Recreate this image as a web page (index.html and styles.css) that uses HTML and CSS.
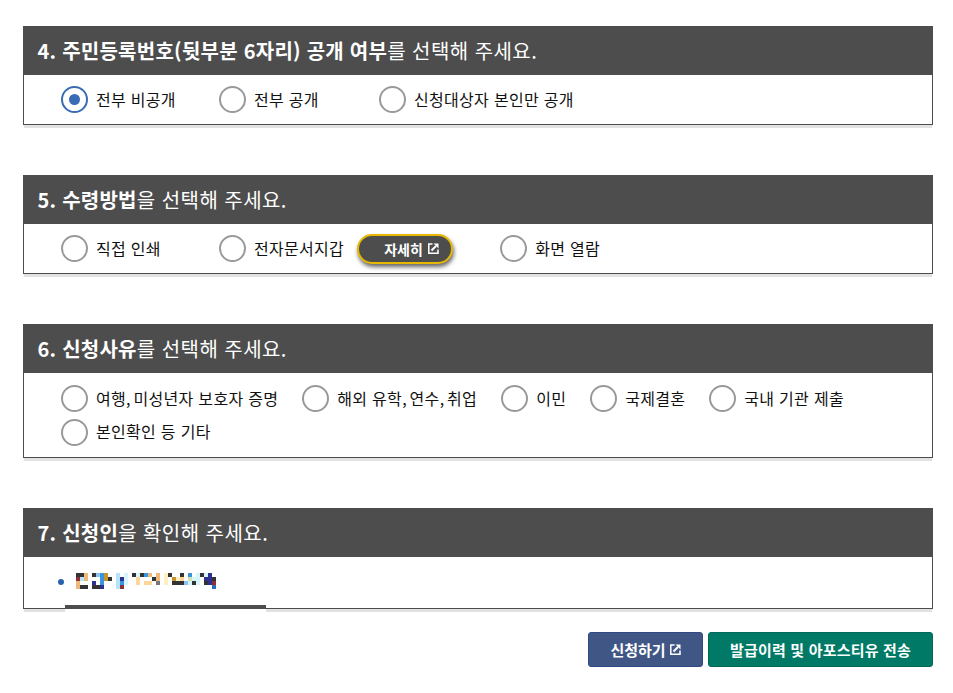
FILE: index.html
```html
<!DOCTYPE html>
<html lang="ko">
<head>
<meta charset="utf-8">
<title>신청</title>
<link rel="stylesheet" href="styles.css">
</head>
<body>
<section class="card">
  <h2 class="head"><b>4. 주민등록번호(뒷부분 6자리) 공개 여부</b>를 선택해 주세요.</h2>
  <div class="body">
    <label class="opt col-a"><span class="radio on"></span>전부 비공개</label>
    <label class="opt col-b"><span class="radio"></span>전부 공개</label>
    <label class="opt"><span class="radio"></span>신청대상자 본인만 공개</label>
  </div>
</section>
<section class="card">
  <h2 class="head"><b>5. 수령방법</b>을 선택해 주세요.</h2>
  <div class="body">
    <label class="opt col-a"><span class="radio"></span>직접 인쇄</label>
    <label class="opt tight"><span class="radio"></span>전자문서지갑</label>
    <a class="more">자세히 <svg class="ext" viewBox="0 0 11 11"><path d="M4.500 1H.8v9.200H10V6.500" fill="none" stroke="currentColor" stroke-width="1.500"/><path d="M3.500 7.500 8 3" fill="none" stroke="currentColor" stroke-width="2"/><path d="M5.500 .5H10.500V5.500z" fill="currentColor"/></svg></a>
    <label class="opt"><span class="radio"></span>화면 열람</label>
  </div>
</section>
<section class="card">
  <h2 class="head"><b>6. 신청사유</b>를 선택해 주세요.</h2>
  <div class="body wrap">
    <label class="opt"><span class="radio"></span><span>여행<span class="comma">,</span> 미성년자 보호자 증명</span></label>
    <label class="opt"><span class="radio"></span><span>해외 유학<span class="comma">,</span> 연수<span class="comma">,</span> 취업</span></label>
    <label class="opt"><span class="radio"></span>이민</label>
    <label class="opt"><span class="radio"></span>국제결혼</label>
    <label class="opt"><span class="radio"></span>국내 기관 제출</label>
    <label class="opt"><span class="radio"></span>본인확인 등 기타</label>
  </div>
</section>
<section class="card last">
  <h2 class="head"><b>7. 신청인</b>을 확인해 주세요.</h2>
  <div class="body person">
    <span class="dot"></span>
    <svg class="mosaic" viewBox="0 0 35 4" shape-rendering="crispEdges">
      <path fill="#333333" d="M0 0h2v1H0zM4 0h1v1H4zM14 0h1v1h-1zM16 0h1v1h-1zM23 0h1v1h-1zM26 0h1v1h-1zM31 0h1v1h-1zM8 1h1v1H8zM19 1h1v1h-1zM34 1h1v1h-1zM24 2h3v1h-3zM29 2h1v1h-1zM32 2h1v1h-1zM1 3h2v1H1zM4 3h2v1H4z"/>
      <path fill="#f0b878" d="M2 0h1v2H2zM18 0h1v1h-1zM20 0h1v2h-1zM0 2h1v2H0z"/>
      <path fill="#3a96dc" d="M6 0h1v3H6zM17 0h1v1h-1zM28 0h1v1h-1zM11 2h1v1h-1z"/>
      <path fill="#8cc4f0" d="M5 0h1v1H5zM27 2h1v1h-1z"/>
      <path fill="#c8922c" d="M7 0h1v2H7zM24 1h1v1h-1z"/>
      <path fill="#2f2f8f" d="M33 0h1v1h-1zM11 1h1v1h-1zM32 1h2v1h-2zM4 2h1v1H4zM33 2h1v1h-1zM6 3h1v1H6z"/>
      <path fill="#b4e4fa" d="M10 0h1v4h-1zM1 1h1v1H1z"/>
      <path fill="#8e2f35" d="M0 1h1v1H0zM34 2h1v1h-1zM11 3h1v1h-1z"/>
      <path fill="#d6f6fc" d="M12 0h1v3h-1zM15 0h1v1h-1zM30 0h1v3h-1zM32 0h1v1h-1zM29 1h1v1h-1zM28 2h1v1h-1z"/>
      <path fill="#ffd59a" d="M15 1h1v2h-1zM26 1h1v1h-1zM17 2h2v1h-2z"/>
      <path fill="#fff0c4" d="M22 0h1v3h-1zM25 1h1v1h-1z"/>
      <path fill="#cfe6b4" d="M28 1h1v1h-1z"/>
      <path fill="#777777" d="M20 2h1v1h-1z"/>
      <path fill="#2a70b8" d="M34 3h1v1h-1z"/>
    </svg>
    <div class="strip"></div>
  </div>
</section>
<div class="actions">
  <a class="btn navy">신청하기 <svg class="ext" viewBox="0 0 11 11"><path d="M4.500 1H.8v9.200H10V6.500" fill="none" stroke="currentColor" stroke-width="1.500"/><path d="M3.500 7.500 8 3" fill="none" stroke="currentColor" stroke-width="2"/><path d="M5.500 .5H10.500V5.500z" fill="currentColor"/></svg></a>
  <a class="btn green">발급이력 및 아포스티유 전송</a>
</div>
</body>
</html>
```
FILE: styles.css
```css
* { box-sizing: border-box; }
html, body { margin: 0; background: #fff; }
body {
  width: 953px;
  height: 693px;
  overflow: hidden;
  padding: 26px 20px 0 23px;
  font-family: "Noto Sans CJK KR", "Noto Sans", sans-serif;
  color: #111;
}
.card {
  width: 910px;
  margin-bottom: 50px;
  box-shadow: 0 4px 0 -1px #e2e2e2;
}
.card.last { margin-bottom: 0; }
.head {
  margin: 0;
  height: 49px;
  padding-left: 14.500px;
  background: #4d4d4d;
  color: #fff;
  font-size: 20px;
  font-weight: 400;
  letter-spacing: .45px;
  line-height: 49px;
  white-space: nowrap;
}
.head b { font-weight: 700; letter-spacing: .25px; }
.body {
  display: flex;
  align-items: center;
  min-height: 50px;
  padding: 0 0 0 37px;
  background: #fff;
  border: 1px solid #4d4d4d;
  border-top: 0;
}
.wrap { flex-wrap: wrap; min-height: 85px; padding-top: 9px; padding-bottom: 8px; }
.opt {
  display: flex;
  align-items: center;
  gap: 8px;
  height: 33px;
  margin-right: 24px;
  padding-bottom: 2px;
  font-size: 16px;
  font-weight: 400;
  letter-spacing: .3px;
  white-space: nowrap;
}
.comma { letter-spacing: -1.800px; }
.opt.col-a { width: 158px; margin-right: 0; }
.opt.col-b { width: 160px; margin-right: 0; }
.opt.tight { margin-right: 13px; }
.radio {
  width: 27px;
  height: 27px;
  flex: none;
  margin-bottom: -2px;
  border: 2px solid #999;
  border-radius: 50%;
  background: #fff;
}
.radio.on {
  position: relative;
  border-color: #3a6bb5;
}
.radio.on::after {
  content: "";
  position: absolute;
  left: 6px;
  top: 6px;
  width: 11px;
  height: 11px;
  border-radius: 50%;
  background: #3a6bb5;
}
.more {
  display: flex;
  align-items: center;
  gap: 5px;
  width: 96px;
  height: 30px;
  margin-right: 47px;
  padding-left: 25px;
  border: 2px solid #e6b800;
  border-radius: 15px;
  background: #4d4d4d;
  color: #fff;
  font-size: 14px;
  font-weight: 700;
  box-shadow: 1px 3px 4px rgba(0, 0, 0, .6);
}
.ext { width: 11px; height: 11px; flex: none; }
.person { position: relative; height: 52px; min-height: 0; align-items: flex-start; padding: 16px 0 0 34px; }
.dot { width: 6px; height: 6px; margin-top: 6px; border-radius: 50%; background: #2a62ad; }
.mosaic { margin-left: 12px; width: 140px; height: 16px; }
.strip { position: absolute; left: 41px; bottom: -1px; width: 201px; height: 4px; background: #4d4d4d; }
.strip::after { content: ""; position: absolute; left: 0; right: 0; top: 100%; height: 3px; background: #fff; }
.actions { display: flex; justify-content: flex-end; gap: 5px; width: 910px; margin-top: 23px; }
.btn {
  display: flex;
  align-items: center;
  justify-content: center;
  gap: 4px;
  height: 35px;
  padding-bottom: 1px;
  border-radius: 3px;
  color: #fff;
  font-size: 15px;
  font-weight: 700;
}
.navy { width: 115px; background: #405785; border: 1px solid #2f4a85; }
.green { width: 225px; background: #007a66; border: 1px solid #006a58; letter-spacing: .2px; }
```
